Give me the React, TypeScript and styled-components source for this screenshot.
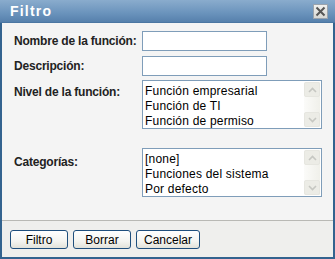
import * as React from "react";
import styled, { createGlobalStyle } from "styled-components";

const Global = createGlobalStyle`
  html, body { margin: 0; padding: 0; background: #f4f4f4; }
  * { box-sizing: border-box; }
`;

const Window = styled.div`
  width: 335px;
  height: 259px;
  display: flex;
  flex-direction: column;
  background: #f4f4f4;
  border-left: 2px solid #33638f;
  border-right: 2px solid #33638f;
  border-bottom: 2px solid #33638f;
  font-family: Tahoma, "Liberation Sans", sans-serif;
`;

const TitleBar = styled.div`
  height: 23px;
  margin: 0 -2px;
  display: flex;
  align-items: center;
  justify-content: space-between;
  padding: 0 7px 0 10px;
  background: linear-gradient(#8aaccd, #6a93bc 60%, #5680ac);
  border-bottom: 1px solid #4b76a2;
`;

const Title = styled.span`
  color: #ffffff;
  font: bold 14px "Liberation Sans", sans-serif;
  letter-spacing: 1.2px;
`;

const CloseButton = styled.div`
  width: 15px;
  height: 15px;
  background: linear-gradient(#f0f0ee, #d8d8d4);
  border: 1px solid #9aa3ad;
  display: flex;
  align-items: center;
  justify-content: center;
`;

const Content = styled.div`
  flex: 1;
  display: grid;
  grid-template-columns: 128px 180px;
  row-gap: 5px;
  align-items: start;
  align-content: start;
  padding: 8px 0 0 12px;
`;

const Label = styled.label<{ $top?: number }>`
  font: bold 12px "Liberation Sans", sans-serif;
  color: #222;
  padding-top: ${p => p.$top ?? 0}px;
  white-space: nowrap;
  letter-spacing: -0.2px;
`;

const TextBox = styled.input`
  width: 125px;
  height: 20px;
  border: 1px solid #7f9db9;
  background: #fff;
  margin: 0;
  padding: 0 2px;
`;

const ListBox = styled.div<{ $mt?: number }>`
  width: 180px;
  height: 49px;
  margin-top: ${p => p.$mt ?? 0}px;
  border: 1px solid #7f9db9;
  background: #fff;
  display: flex;
`;

const Options = styled.div`
  flex: 1;
  padding: 3px 0 0 2px;
  font: 12px "Liberation Sans", sans-serif;
  line-height: 15px;
  color: #000;
  letter-spacing: 0.2px;
`;

const ScrollTrack = styled.div`
  width: 16px;
  margin: 1px;
  background: linear-gradient(90deg, #fbfbf9, #f0f0ea);
  display: flex;
  flex-direction: column;
  justify-content: space-between;
`;

const ScrollButton = styled.div`
  height: 15px;
  border: 1px solid #e6e6e0;
  border-radius: 2px;
  background: #ecece6;
  display: flex;
  align-items: center;
  justify-content: center;
`;

const Footer = styled.div`
  height: 37px;
  border-top: 1px solid #b9b9b5;
  background: #efefed;
  display: flex;
  gap: 5px;
  padding: 9px 0 0 8px;
`;

const Button = styled.button<{ $w: number }>`
  width: ${p => p.$w}px;
  height: 19px;
  border: 1px solid #1f4f7d;
  border-radius: 3px;
  background: linear-gradient(#ffffff, #f4f4f0 60%, #e2e2da);
  font: 12px "Liberation Sans", sans-serif;
  color: #000;
  padding: 0;
`;

const Arrow: React.FC<{ up?: boolean }> = ({ up }) => (
  <svg width="9" height="6" viewBox="0 0 9 6">
    <path d={up ? "M1 5 L4.5 1.5 L8 5" : "M1 1 L4.5 4.5 L8 1"} fill="none" stroke="#c6c7c2" strokeWidth="1.6" />
  </svg>
);

const List: React.FC<{ items: string[]; mt?: number }> = ({ items, mt }) => (
  <ListBox $mt={mt}>
    <Options>
      {items.map(i => <div key={i}>{i}</div>)}
    </Options>
    <ScrollTrack>
      <ScrollButton><Arrow up /></ScrollButton>
      <ScrollButton><Arrow /></ScrollButton>
    </ScrollTrack>
  </ListBox>
);

export default function App() {
  return (
    <>
      <Global />
      <Window>
        <TitleBar>
          <Title>Filtro</Title>
          <CloseButton>
            <svg width="11" height="11" viewBox="0 0 11 11">
              <path d="M1.5 1.5 L9.5 9.5 M9.5 1.5 L1.5 9.5" stroke="#555" strokeWidth="2" />
            </svg>
          </CloseButton>
        </TitleBar>
        <Content>
          <Label $top={3}>Nombre de la función:</Label>
          <TextBox type="text" />
          <Label $top={3}>Descripción:</Label>
          <TextBox type="text" />
          <Label $top={4}>Nivel de la función:</Label>
          <List mt={-1} items={["Función empresarial", "Función de TI", "Función de permiso"]} />
          <Label $top={21}>Categorías:</Label>
          <List mt={14} items={["[none]", "Funciones del sistema", "Por defecto"]} />
        </Content>
        <Footer>
          <Button $w={58}>Filtro</Button>
          <Button $w={58}>Borrar</Button>
          <Button $w={64}>Cancelar</Button>
        </Footer>
      </Window>
    </>
  );
}
